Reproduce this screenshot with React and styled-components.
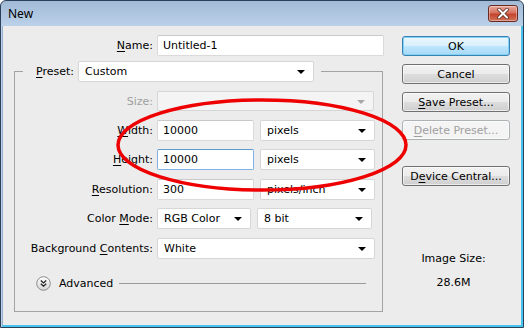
import React from 'react'
import styled, { createGlobalStyle } from 'styled-components'

const GlobalStyle = createGlobalStyle`
  html, body { margin: 0; padding: 0; background: #fff; }
  body { font-family: "DejaVu Sans", Tahoma, sans-serif; font-size: 11px; color: #000; }
  * { box-sizing: border-box; }
`;

const Window = styled.div`
  position: relative;
  width: 524px;
  height: 328px;
  border: 1px solid #2c4159;
  border-radius: 6px 6px 0 0;
  background: linear-gradient(#a1bad6 0px, #bcd2ea 26px, #bcd2ea 100%);
  display: flex;
  flex-direction: column;
`;

const TitleBar = styled.div`
  height: 25px;
  display: flex;
  align-items: center;
  justify-content: space-between;
  padding: 0 5px 2px 7px;
`;

const Title = styled.span`
  font-family: "Noto Sans", "DejaVu Sans", sans-serif;
  font-size: 12px;
  color: #000;
  padding-top: 1px;
`;

const CloseButton = styled.button`
  width: 30px;
  height: 17px;
  margin-top: 1px;
  padding: 0;
  border: 1px solid #6a2a20;
  border-radius: 3px;
  background: linear-gradient(#e9a99c 0%, #d6725f 45%, #c3442d 55%, #d2735a 100%);
  box-shadow: inset 0 0 0 1px rgba(255, 255, 255, 0.35);
  display: flex;
  align-items: center;
  justify-content: center;
`;

const Client = styled.div`
  flex: 1;
  margin-left: 1px;
  background: #ececec;
  border-left: 1px solid #97b2cf;
  border-right: 2px solid #46c3ee;
  border-bottom: 2px solid #46c3ee;
  display: flex;
  padding: 9px 11px 0 11px;
`;

const FormColumn = styled.div`
  width: 371px;
  display: flex;
  flex-direction: column;
`;

const NameRow = styled.div`
  display: grid;
  grid-template-columns: 139px 227px;
  column-gap: 4px;
  align-items: center;
`;

const Label = styled.label`
  text-align: right;
  white-space: nowrap;
  color: ${p => (p.disabled ? '#a0a0a0' : '#000')};
`;

const Key = styled.span`
  text-decoration: underline;
  text-underline-offset: 2px;
`;

const TextBox = styled.div`
  height: 21px;
  width: ${p => p.w}px;
  background: #fff;
  border: 1px solid ${p => (p.focused ? '#7fb2e3' : '#dadada')};
  border-top-color: ${p => (p.focused ? '#5f98cf' : '#c9c9c9')};
  border-radius: 2px;
  padding: 0 5px;
  display: flex;
  align-items: center;
  white-space: nowrap;
`;

const Combo = styled.div`
  height: ${p => p.h || 21}px;
  width: ${p => p.w}px;
  background: ${p => (p.disabled ? '#f4f4f4' : '#fff')};
  border: 1px solid #d6d6d6;
  border-radius: 2px;
  padding: 0 8px 0 6px;
  display: flex;
  align-items: center;
  white-space: nowrap;
  &::after {
    content: '';
    margin-left: auto;
    border-left: 4px solid transparent;
    border-right: 4px solid transparent;
    border-top: 4px solid ${p => (p.disabled ? '#a8a8a8' : '#000')};
    margin-top: 1px;
  }
`;

const GroupBox = styled.fieldset`
  width: 369px;
  margin: 5px 0 0 0;
  padding: 9px 0 19px 0;
  border: 1px solid #a3a3a3;
  border-radius: 0;
  min-width: 0;
`;

const Legend = styled.legend`
  margin-left: 8px;
  padding: 0 7px 0 13px;
  display: flex;
  align-items: center;
  gap: 4px;
`;

const FieldGrid = styled.div`
  display: grid;
  grid-template-columns: 138px 1fr;
  column-gap: 4px;
  row-gap: 8.5px;
  align-items: center;
`;

const Controls = styled.div`
  display: flex;
  gap: 6px;
`;

const AdvancedRow = styled.div`
  display: flex;
  align-items: center;
  margin-top: 17px;
  padding-left: 21px;
  padding-right: 16px;
  height: 16px;
`;

const AdvancedText = styled.span`
  margin-left: 8px;
`;

const Rule = styled.div`
  flex: 1;
  height: 1px;
  background: #9a9a9a;
  margin-left: 6px;
`;

const ButtonColumn = styled.div`
  width: 108px;
  margin-left: auto;
  padding-top: 1px;
  display: flex;
  flex-direction: column;
  gap: 8px;
`;

const Button = styled.button`
  height: 20px;
  width: 108px;
  margin-top: ${p => p.gapTop || 0}px;
  padding: 0;
  font-family: inherit;
  font-size: 11px;
  color: ${p => (p.disabled ? '#a0a0a0' : '#000')};
  border: 1px solid ${p => (p.primary ? '#3c7fb1' : p.disabled ? '#adb2b5' : '#707070')};
  border-radius: 3px;
  background: ${p =>
    p.disabled
      ? '#f4f4f4'
      : p.primary
      ? 'linear-gradient(#eaf6fd 0%, #d9f0fc 50%, #bee6fd 51%, #a7d9f5 100%)'
      : 'linear-gradient(#f2f2f2 0%, #ebebeb 50%, #dddddd 51%, #cfcfcf 100%)'};
  box-shadow: ${p => (p.primary ? 'inset 0 0 0 1px #7fd3f7' : 'inset 0 0 0 1px rgba(255,255,255,0.6)')};
`;

const ImageSize = styled.div`
  margin-top: 58px;
  display: flex;
  flex-direction: column;
  align-items: center;
  gap: 11px;
  padding-right: 5px;
  line-height: 13px;
`;

const Ellipse = styled.svg`
  position: absolute;
  left: -1px;
  top: -1px;
  pointer-events: none;
`;

function AdvancedIcon() {
  return (
    <svg width="15" height="15" viewBox="0 0 15 15">
      <defs>
        <linearGradient id="adv" x1="0" y1="0" x2="0" y2="1">
          <stop offset="0" stopColor="#ffffff" />
          <stop offset="1" stopColor="#d4d4d4" />
        </linearGradient>
      </defs>
      <circle cx="7.5" cy="7.5" r="6.8" fill="url(#adv)" stroke="#8c8c8c" />
      <path d="M4.8 4.6 L7.5 7 L10.2 4.6 M4.8 7.8 L7.5 10.2 L10.2 7.8" fill="none" stroke="#222" strokeWidth="1.3" />
    </svg>
  )
}

export default function App() {
  return (
    <>
      <GlobalStyle />
      <Window>
        <TitleBar>
          <Title>New</Title>
          <CloseButton aria-label="Close">
            <svg width="14" height="11" viewBox="0 0 14 11">
              <path d="M3 1.5 L11 9.5 M11 1.5 L3 9.5" stroke="#5a2a22" strokeWidth="3.6" strokeLinecap="round" />
              <path d="M3 1.5 L11 9.5 M11 1.5 L3 9.5" stroke="#fff" strokeWidth="2" strokeLinecap="round" />
            </svg>
          </CloseButton>
        </TitleBar>
        <Client>
          <FormColumn>
            <NameRow>
              <Label><Key>N</Key>ame:</Label>
              <TextBox w={227}>Untitled-1</TextBox>
            </NameRow>
            <GroupBox>
              <Legend>
                <Label><Key>P</Key>reset:</Label>
                <Combo w={236}>Custom</Combo>
              </Legend>
              <FieldGrid>
                <Label disabled>Size:</Label>
                <Controls><Combo w={217} h={20} disabled /></Controls>

                <Label><Key>W</Key>idth:</Label>
                <Controls>
                  <TextBox w={97}>10000</TextBox>
                  <Combo w={115}>pixels</Combo>
                </Controls>

                <Label><Key>H</Key>eight:</Label>
                <Controls>
                  <TextBox w={97} focused>10000</TextBox>
                  <Combo w={115}>pixels</Combo>
                </Controls>

                <Label><Key>R</Key>esolution:</Label>
                <Controls>
                  <TextBox w={97}>300</TextBox>
                  <Combo w={115}>pixels/inch</Combo>
                </Controls>

                <Label>Color <Key>M</Key>ode:</Label>
                <Controls>
                  <Combo w={94}>RGB Color</Combo>
                  <Combo w={115}>8 bit</Combo>
                </Controls>

                <Label>Background <Key>C</Key>ontents:</Label>
                <Controls><Combo w={218}>White</Combo></Controls>
              </FieldGrid>
              <AdvancedRow>
                <AdvancedIcon />
                <AdvancedText>Advanced</AdvancedText>
                <Rule />
              </AdvancedRow>
            </GroupBox>
          </FormColumn>
          <ButtonColumn>
            <Button primary>OK</Button>
            <Button>Cancel</Button>
            <Button><Key>S</Key>ave Preset...</Button>
            <Button disabled><Key>D</Key>elete Preset...</Button>
            <Button gapTop={18}>D<Key>e</Key>vice Central...</Button>
            <ImageSize>
              <span>Image Size:</span>
              <span>28.6M</span>
            </ImageSize>
          </ButtonColumn>
        </Client>
        <Ellipse width="524" height="328" viewBox="0 0 524 328">
          <ellipse cx="262" cy="145" rx="144" ry="45" fill="none" stroke="#ee0000" strokeWidth="3.5" />
        </Ellipse>
      </Window>
    </>
  )
}
